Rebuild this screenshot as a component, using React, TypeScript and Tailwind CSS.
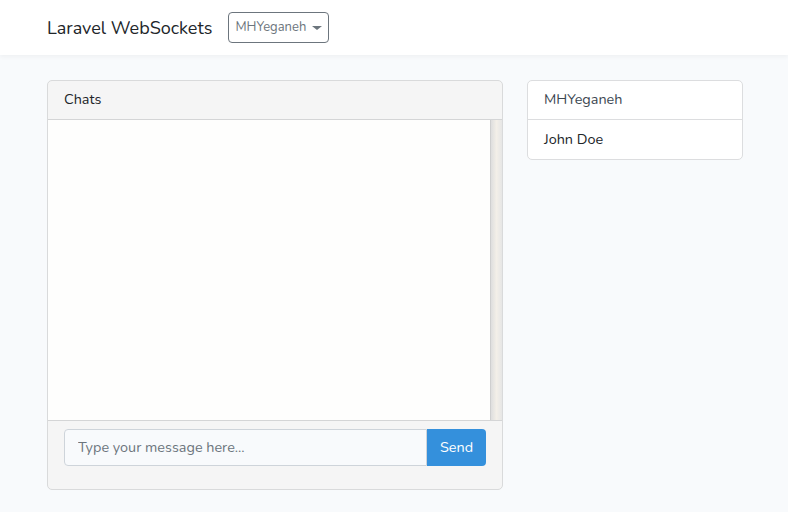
export default function App() {
  return (
    <div className="min-h-[512px] bg-[#f8fafc] font-['Nunito','Noto_Sans',sans-serif] text-[#212529]">
      <nav className="h-[55px] bg-white shadow-[0_2px_4px_rgba(0,0,0,0.04)] flex items-center pl-[47px]">
        <span className="text-[18px] leading-none mr-[16px]">Laravel WebSockets</span>
        <button className="h-[31px] w-[101px] flex items-center justify-center gap-[6px] rounded-[4px] border border-[#6c757d] text-[13px] text-[#6c757d]">
          MHYeganeh
          <span className="w-0 h-0 border-l-[5px] border-r-[5px] border-t-[4px] border-l-transparent border-r-transparent border-t-[#6c757d]" />
        </button>
      </nav>

      <main className="flex gap-[24px] pl-[47px] pt-[25px]">
        <div className="w-[456px] rounded-[5px] border border-[#d9dadb] bg-[#f5f5f5] overflow-hidden">
          <div className="h-[39px] flex items-center px-[16px] border-b border-[#d4d5d6] text-[14.4px]">Chats</div>
          <div className="h-[301px] bg-[#fefefd] flex justify-end border-b border-[#d4d5d6]">
            <div className="w-[12px] h-full bg-gradient-to-r from-[#dedede] via-[#f3efe8] to-[#e6e6e6] border-l border-[#cfcfcf]" />
          </div>
          <div className="px-[16px] pt-[8px] pb-[23px]">
            <div className="flex h-[37px]">
              <input
                className="flex-1 min-w-0 rounded-l-[4px] border border-[#ced4da] bg-[#f8fafc] px-[13px] text-[14.4px] text-[#495057] placeholder:text-[#6c757d] outline-none"
                placeholder="Type your message here..."
              />
              <button className="w-[59px] rounded-r-[4px] bg-[#3490dc] text-white text-[14.4px]">Send</button>
            </div>
          </div>
        </div>

        <div className="w-[216px] self-start rounded-[5px] border border-[#dcdddf] bg-white text-[14.4px]">
          <div className="h-[39px] flex items-center px-[16px] border-b border-[#dcdddf] text-[#3d4852]">MHYeganeh</div>
          <div className="h-[39px] flex items-center px-[16px] text-[#212529]">John Doe</div>
        </div>
      </main>
    </div>
  );
}
